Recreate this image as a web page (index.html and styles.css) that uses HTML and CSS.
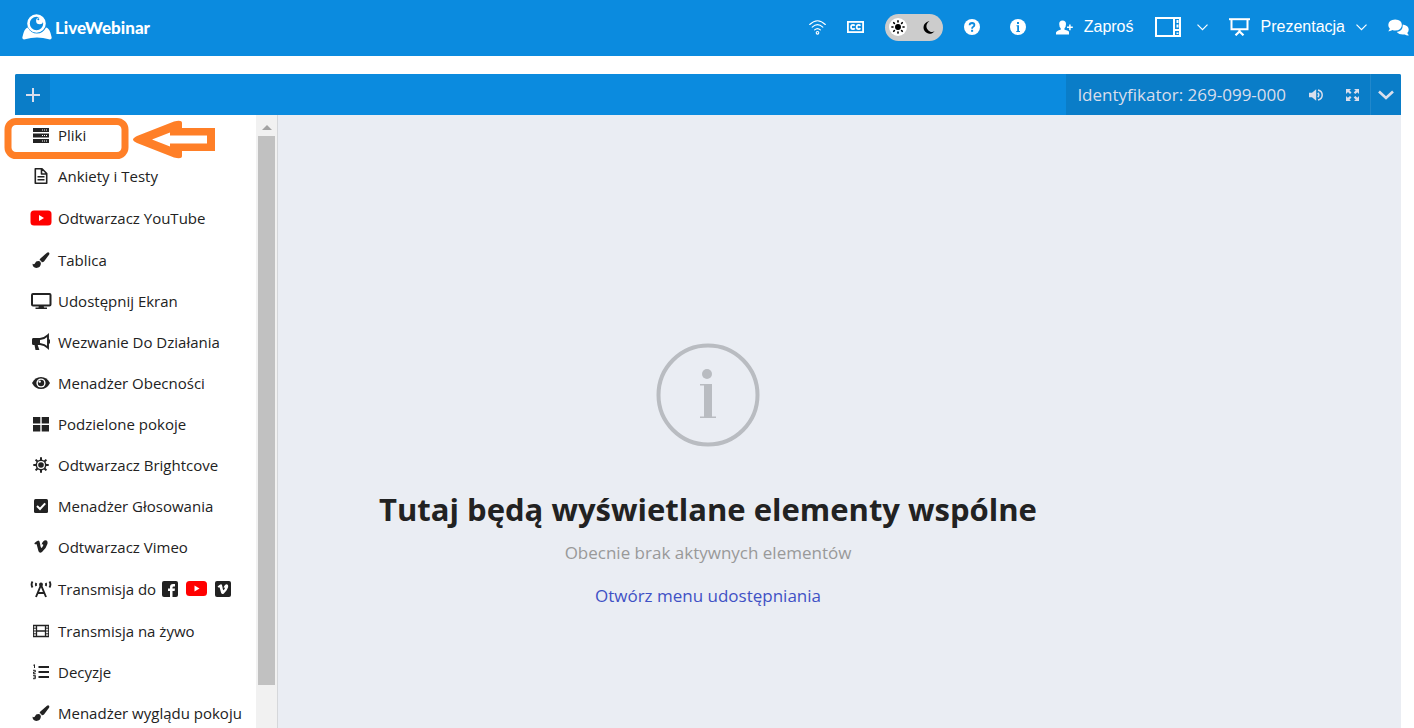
FILE: index.html
```html
<!DOCTYPE html>
<html lang="pl">
<head>
  <meta charset="UTF-8">
  <meta name="viewport" content="width=device-width, initial-scale=1.0">
  <title>LiveWebinar</title>
  <link rel="stylesheet" href="styles.css">
</head>
<body>
<header class="header">
  <a class="logo" href="#">
    <svg width="30" height="26" viewBox="0 0 30 26">
      <path d="M6 13.500 Q3 14 1.500 19 L0.300 23.500 Q0.300 25.800 3 25.300 Q15 21.500 27 25.300 Q29.700 25.800 29.700 23.500 L28.500 19 Q27 14 24 13.500 Q21 19.500 15 19.500 Q9 19.500 6 13.500Z" fill="#fff"/>
      <circle cx="14.500" cy="9.500" r="9.500" fill="#0b8bdf"/>
      <circle cx="14.500" cy="9.500" r="8" fill="none" stroke="#fff" stroke-width="2.600"/>
      <circle cx="17.600" cy="6.800" r="3.500" fill="#fff"/>
      <circle cx="16.300" cy="5.300" r="1" fill="#0b8bdf"/>
    </svg>
    <span>LiveWebinar</span>
  </a>
  <nav class="tools">
    <button class="tool" aria-label="Sieć">
      <svg width="17" height="15" viewBox="0 0 17 15" fill="none" stroke="#fff" stroke-width="1.100" stroke-linecap="round">
        <path d="M0.700 4.500 Q8.500 -3 16.300 4.500M3.200 7.200 Q8.500 2.200 13.800 7.200M5.600 9.900 Q8.500 7.200 11.400 9.900"/>
        <circle cx="8.500" cy="12.800" r="1.300"/>
      </svg>
    </button>
    <button class="tool" aria-label="Napisy">
      <svg width="17" height="12" viewBox="0 0 17 12" fill="none" stroke="#fff">
        <rect x="0.900" y="0.900" width="15.200" height="10.200" stroke-width="1.800"/>
        <path d="M7.700 4.700 Q7.200 3.900 6 3.900 Q4 3.900 4 6 Q4 8.100 6 8.100 Q7.200 8.100 7.700 7.300M13.400 4.700 Q12.900 3.900 11.700 3.900 Q9.700 3.900 9.700 6 Q9.700 8.100 11.700 8.100 Q12.900 8.100 13.400 7.300" stroke-width="1.700"/>
      </svg>
    </button>
    <label class="theme" aria-label="Motyw">
      <input type="checkbox">
      <span class="knob">
        <svg width="14" height="14" viewBox="0 0 14 14" stroke="#000" stroke-width="1.600" stroke-linecap="round">
          <circle cx="7" cy="7" r="2.200"/>
          <path d="M7 0.900V2M7 12V13.100M0.900 7H2M12 7H13.100M2.700 2.700L3.400 3.400M10.600 10.600L11.300 11.300M2.700 11.300L3.400 10.600M10.600 3.400L11.300 2.700"/>
        </svg>
      </span>
      <svg width="12" height="13" viewBox="0 0 12 13"><path d="M6.500 0.300 A6.200 6.200 0 1 0 11.600 10.300 A5.600 5.600 0 0 1 6.500 0.300Z"/></svg>
    </label>
    <button class="tool" aria-label="Pomoc">
      <svg width="16" height="16" viewBox="0 0 16 16">
        <circle cx="8" cy="8" r="8" fill="#fff"/>
        <path d="M5.600 6.200 Q5.700 4 8.100 4 Q10.400 4.100 10.400 6 Q10.400 7.100 9.200 7.800 Q8.100 8.400 8.100 9.700" fill="none" stroke="#0b8bdf" stroke-width="1.800"/>
        <rect x="7.100" y="10.800" width="2" height="2" fill="#0b8bdf"/>
      </svg>
    </button>
    <button class="tool info-tool" aria-label="Informacje">
      <svg width="16" height="16" viewBox="0 0 16 16">
        <circle cx="8" cy="8" r="8" fill="#fff"/>
        <path d="M7 3H9V5H7ZM6.500 6.300H9V12H10V13H6.300V12H7.200V7.300H6.500Z" fill="#0b8bdf"/>
      </svg>
    </button>
    <button class="tool" aria-label="Zaproś">
      <svg width="17" height="15" viewBox="0 0 17 15" fill="#fff">
        <path d="M6.500 0.500 Q10 0.500 10 4 Q10 7 8.500 8.300 V9.800 Q12.800 10.800 13 12 V14.500 H0 V12.500 Q0.500 10.800 4.700 9.800 V8.300 Q3.200 7 3.200 4 Q3.200 0.500 6.500 0.500Z"/>
        <path d="M11 7.300H16.800M13.900 4.400V10.200" stroke="#fff" stroke-width="1.500"/>
      </svg>
      <span>Zaproś</span>
    </button>
    <button class="tool layout-tool" aria-label="Układ">
      <svg width="26" height="20" viewBox="0 0 26 20" fill="none" stroke="#fff">
        <rect x="1" y="1" width="24" height="18" stroke-width="2"/>
        <path d="M19 1V19" stroke-width="2"/>
        <path d="M22.500 3V6M22.500 7.500V10.500M22.500 15.500V17" stroke-width="2"/>
        <path d="M19 13H25" stroke-width="2"/>
      </svg>
      <svg class="chevron" width="11" height="7" viewBox="0 0 11 7"><path d="M0.500 0.700L5.500 5.700L10.500 0.700" fill="none" stroke="#fff" stroke-width="1.200"/></svg>
    </button>
    <button class="tool">
      <svg width="21" height="18" viewBox="0 0 21 18" fill="none" stroke="#fff">
        <path d="M0 1.200H21" stroke-width="2"/>
        <path d="M2.500 1V11.300H18.500V1" stroke-width="2"/>
        <path d="M10.500 11V14M6.500 17.300L10.500 13.500L14.500 17.300" stroke-width="2.200"/>
      </svg>
      <span>Prezentacja</span>
      <svg class="chevron" width="11" height="7" viewBox="0 0 11 7"><path d="M0.500 0.700L5.500 5.700L10.500 0.700" fill="none" stroke="#fff" stroke-width="1.200"/></svg>
    </button>
    <button class="tool" aria-label="Czat">
      <svg width="21" height="17" viewBox="0 0 21 17" fill="#fff">
        <path d="M14.800 5.400 Q20.700 6.200 20.700 10.600 Q20.700 12.700 19.300 14 Q19.800 15.500 21 16.300 Q18.700 16.700 16.800 15.400 Q11.500 16.300 8.700 13 Q14.800 12.300 14.800 5.400Z"/>
        <path d="M7.200 0.500 Q13.900 0.700 13.900 6 Q13.700 11.400 7.200 11.600 Q5.800 11.600 4.500 11.100 Q2.600 12.500 0.200 12.200 Q1.500 11 1.800 9.500 Q0.300 8.100 0.300 6 Q0.400 0.800 7.200 0.500Z"/>
      </svg>
    </button>
  </nav>
</header>

<main class="panel">
  <div class="bar">
    <button class="add" aria-label="Dodaj">
      <svg width="14" height="14" viewBox="0 0 14 14"><path d="M7 0V14M0 7H14" stroke="#d9deec" stroke-width="2"/></svg>
    </button>
    <div class="room">
      <span>Identyfikator: 269-099-000</span>
      <button aria-label="Dźwięk">
        <svg width="14" height="12" viewBox="0 0 14 12" fill="#d9deec">
          <path d="M0 3.700H3L7.200 0.300V11.700L3 8.300H0Z"/>
          <path d="M8.800 3.800Q10.800 6 8.800 8.200M9 0.900Q13.200 2 13.200 6Q13.200 10 9 11.100" fill="none" stroke="#d9deec" stroke-width="1.500"/>
        </svg>
      </button>
      <button aria-label="Pełny ekran">
        <svg width="13" height="12" viewBox="0 0 13 12" fill="#d9deec">
          <path d="M0 0H5L3.500 1.500L5.500 3.500L4 5L2 3L0.500 4.500L0 5ZM13 0V5L11.300 3.200L9.300 5L7.700 3.500L9.700 1.600L8 0ZM0 12V7L1.800 8.700L4 7L5.500 8.500L3.500 10.400L5 12ZM13 12H8L9.700 10.400L7.700 8.500L9.300 7L11.300 8.700L13 7Z"/>
        </svg>
      </button>
    </div>
    <button class="more" aria-label="Więcej">
      <svg width="16" height="10" viewBox="0 0 16 10"><path d="M1 1.500L8 8L15 1.500" fill="none" stroke="#d9deec" stroke-width="2.600"/></svg>
    </button>
  </div>

  <section class="stage">
    <svg class="info" width="104" height="104" viewBox="0 0 104 104" fill="#b9bcc1">
      <circle cx="52" cy="52" r="49.500" fill="none" stroke="#b9bcc1" stroke-width="4"/>
      <circle cx="51" cy="31" r="5"/>
      <path d="M44 41H56V73.500H60V75H44V73.500H48V42.500H44Z"/>
    </svg>
    <h1>Tutaj będą wyświetlane elementy wspólne</h1>
    <p>Obecnie brak aktywnych elementów</p>
    <a href="#">Otwórz menu udostępniania</a>
  </section>

  <aside class="menu">
    <ul>
      <li><button>
        <svg width="22" height="18" viewBox="0 0 22 18"><path d="M3 2H19V6H3ZM3 7.500H19V11.500H3ZM3 13H19V17H3Z"/><path d="M12 4H17.500M12 9.500H17.500M12 15H17.500" stroke="#fff" stroke-width="1" stroke-dasharray="1 1"/></svg>
        Pliki
      </button></li>
      <li><button>
        <svg width="22" height="18" viewBox="0 0 22 18" fill="none" stroke="#222" stroke-width="1.600"><path d="M5.300 1.800H12L16.700 6.500V16.200H5.300ZM11.500 2V7H16.500" stroke-linejoin="round"/><path d="M7.500 9.700H14.500M7.500 12.700H14.500" stroke-width="1.400"/></svg>
        Ankiety i Testy
      </button></li>
      <li class="tall"><button>
        <svg width="22" height="18" viewBox="0 0 22 18"><rect x="0.500" y="1.500" width="21" height="15" rx="3.500" fill="#f00"/><path d="M9 6L14 9L9 12Z" fill="#fff"/></svg>
        Odtwarzacz YouTube
      </button></li>
      <li><button>
        <svg width="22" height="18" viewBox="0 0 22 18"><path d="M18.200 1.200Q19.900 1.600 19.200 3.500L14 10.500Q13 11.500 11.700 11.300Q11.300 9.400 9.700 9.200Q9.500 8.200 10.400 7.400L17 1.700Q17.500 1.200 18.200 1.200ZM8.400 10.100Q10.700 10.200 10.900 12.300Q10.800 16.900 6.300 16.900Q2.600 16.900 2.500 12.800Q4.300 14 5 12.300Q5.800 10 8.400 10.100Z"/></svg>
        Tablica
      </button></li>
      <li><button>
        <svg width="22" height="18" viewBox="0 0 22 18"><rect x="2" y="2" width="18.500" height="11.500" rx="1" fill="none" stroke="#222" stroke-width="2"/><path d="M9 13H13.500L14 15.500H17V17H5.500V15.500H8.500Z"/></svg>
        Udostępnij Ekran
      </button></li>
      <li><button>
        <svg width="22" height="18" viewBox="0 0 22 18"><path d="M3 5H10V12H7.700L9.400 17H5.500L4.500 12H3Q2 11.800 2 10.500V6.500Q2.100 5.100 3 5Z"/><path d="M10 6Q14.500 5.500 18 2.200V14.800Q14.500 11.500 10 11" fill="none" stroke="#222" stroke-width="1.900"/><rect x="18" y="6.500" width="2" height="4"/></svg>
        Wezwanie Do Działania
      </button></li>
      <li><button>
        <svg width="22" height="18" viewBox="0 0 22 18"><path d="M2 9Q5 3 11 3Q17 3 20 9Q17 15 11 15Q5 15 2 9Z"/><circle cx="11" cy="9" r="4.600" fill="#fff"/><circle cx="11" cy="9" r="3.200"/><circle cx="9.700" cy="7.600" r="1.200" fill="#fff"/></svg>
        Menadżer Obecności
      </button></li>
      <li><button>
        <svg width="22" height="18" viewBox="0 0 22 18"><path d="M3 2H10.300V8.500H3ZM11.700 2H19V8.500H11.700ZM3 10H10.300V16.500H3ZM11.700 10H19V16.500H11.700Z"/></svg>
        Podzielone pokoje
      </button></li>
      <li><button>
        <svg width="22" height="18" viewBox="0 0 22 18"><circle cx="11" cy="9" r="4.700" fill="none" stroke="#222" stroke-width="1.500"/><circle cx="11" cy="9" r="2.800"/><path d="M11 1.300V4M11 14V16.700M3.300 9H6M16 9H18.700M5.600 3.600L7.500 5.500M14.500 12.500L16.400 14.400M5.600 14.400L7.500 12.500M14.500 5.500L16.400 3.600" stroke="#222" stroke-width="2"/></svg>
        Odtwarzacz Brightcove
      </button></li>
      <li><button>
        <svg width="22" height="18" viewBox="0 0 22 18"><rect x="4" y="2" width="14" height="14" rx="1.500"/><path d="M7 9L10 12L15.200 6.300" fill="none" stroke="#fff" stroke-width="2"/></svg>
        Menadżer Głosowania
      </button></li>
      <li><button>
        <svg width="22" height="18" viewBox="0 0 22 18"><path d="M4.300 5.300Q6.500 3 8.300 2.500Q9.700 2.500 10 5.500Q10.600 9.700 11.400 10Q12.200 9.700 13.300 7.200Q13.200 5.800 11.600 6.600Q12.700 2.400 15.600 2.300Q18 2.600 17.500 5.700Q16.400 10.100 12 14Q9.600 15.700 8.500 13.300L6.700 6.600Q6.300 5.600 5.100 6.400Z"/></svg>
        Odtwarzacz Vimeo
      </button></li>
      <li class="tall"><button>
        <svg width="22" height="18" viewBox="0 0 22 18" fill="none" stroke="#222" stroke-width="1.900"><path d="M6 17L11 5L16 17M7.800 13H14.200"/><circle cx="11" cy="4.500" r="1"/><path d="M2.500 1.500Q0.700 4.500 2.500 7.500M19.500 1.500Q21.300 4.500 19.500 7.500M6.300 3Q5.500 4.500 6.300 6M15.700 3Q16.500 4.500 15.700 6"/></svg>
        Transmisja do
        <span class="targets">
          <svg width="16" height="16" viewBox="0 0 16 16"><rect width="16" height="16" rx="2"/><path d="M8 16V10H6V7.500H8V6Q8 3 11 3H13V5.400H11.700Q10.500 5.400 10.500 6.500V7.500H13L12.600 10H10.500V16Z" fill="#fff"/></svg>
          <svg width="21" height="15" viewBox="0 0 21 15"><rect width="21" height="15" rx="3.500" fill="#f00"/><path d="M8.500 4.500L13.500 7.500L8.500 10.500Z" fill="#fff"/></svg>
          <svg width="16" height="16" viewBox="0 0 16 16"><rect width="16" height="16" rx="2"/><path d="M2.600 5.600Q4.500 3.500 6 3.300Q7.100 3.300 7.400 5.700Q7.800 8.900 8.400 9.300Q9 9 9.900 7.200Q9.800 6.200 8.600 6.700Q9.500 3.400 11.700 3.300Q13.600 3.500 13.200 6Q12.400 9.400 8.900 12.400Q7 13.700 6.100 11.700L4.700 6.700Q4.300 5.900 3.300 6.500Z" fill="#fff"/></svg>
        </span>
      </button></li>
      <li><button>
        <svg width="22" height="18" viewBox="0 0 22 18" fill="none" stroke="#222" stroke-width="1.300"><path d="M3 3.500H19M3 14.500H19M6.500 3V15M15.500 3V15M6.500 9H15.500"/><path d="M3.600 3V15M18.400 3V15M3 6.200H6.500M3 9H6.500M3 11.800H6.500M15.500 6.200H19M15.500 9H19M15.500 11.800H19" stroke-width="1"/></svg>
        Transmisja na żywo
      </button></li>
      <li><button>
        <svg width="22" height="18" viewBox="0 0 22 18" fill="none" stroke="#222"><path d="M8.500 4H19M8.500 9H19M8.500 14H19" stroke-width="2"/><path d="M3.300 2.300L4.500 1.700V5M3 7.300H5.300V9H3.500V10.700H5.700M3 12.300H5.300V15.700H3M3.500 14H5.300" stroke-width="1"/></svg>
        Decyzje
      </button></li>
      <li><button>
        <svg width="22" height="18" viewBox="0 0 22 18"><path d="M18.200 1.200Q19.900 1.600 19.200 3.500L14 10.500Q13 11.500 11.700 11.300Q11.300 9.400 9.700 9.200Q9.500 8.200 10.400 7.400L17 1.700Q17.500 1.200 18.200 1.200ZM8.400 10.100Q10.700 10.200 10.900 12.300Q10.800 16.900 6.300 16.900Q2.600 16.900 2.500 12.800Q4.300 14 5 12.300Q5.800 10 8.400 10.100Z"/></svg>
        Menadżer wyglądu pokoju
      </button></li>
    </ul>
    <div class="scroll">
      <svg width="10" height="5" viewBox="0 0 10 5"><path d="M0 5L5 0L10 5Z" fill="#a3a3a3"/></svg>
      <div class="thumb"></div>
    </div>
    <!-- marker over the first menu item -->
    <svg class="marker" width="212" height="42" viewBox="0 0 212 42" fill="none">
      <rect x="4" y="3.500" width="117" height="34" rx="8" stroke="#ff7f27" stroke-width="7"/>
      <path fill="#ff7f27" fill-rule="evenodd" d="M129 21.500Q129 20 133 18L170 3.500Q178 1.500 178 5V10H211V33H178V38Q178 41.500 170 39.500L133 25Q129 23 129 21.500ZM148 21.500L166 28.500V25.500H203V17.500H166V14.500Z"/>
    </svg>
  </aside>
</main>
</body>
</html>
```
FILE: styles.css
```css
* {
  box-sizing: border-box;
}
body {
  margin: 0;
  height: 100vh;
  display: flex;
  flex-direction: column;
  overflow: hidden;
  background: #fff;
  color: #222;
  font-family: "Open Sans", "Noto Sans", sans-serif;
}
button {
  padding: 0;
  border: 0;
  background: none;
  font: inherit;
  color: inherit;
  cursor: pointer;
}
svg {
  display: block;
  flex: none;
}
.header {
  display: flex;
  align-items: center;
  justify-content: space-between;
  height: 56px;
  flex: none;
  padding: 0 5px 2px 22px;
  background: #0b8bdf;
  color: #fff;
}
.logo {
  display: flex;
  align-items: center;
  gap: 3px;
  color: #fff;
  font: 900 17px Lato, sans-serif;
  text-decoration: none;
}
.tools {
  display: flex;
  align-items: center;
  gap: 21px;
  font: 16px "Liberation Sans", Arial, sans-serif;
}
.tool {
  display: flex;
  align-items: center;
  gap: 11px;
}
.info-tool {
  margin: 0 9px;
}
.layout-tool {
  gap: 16px;
}
.theme {
  display: flex;
  align-items: center;
  justify-content: space-between;
  width: 58px;
  height: 27px;
  padding: 0 8px 0 4px;
  border-radius: 14px;
  background: #ccc;
}
.theme input {
  position: absolute;
  opacity: 0;
}
.knob {
  display: flex;
  align-items: center;
  justify-content: center;
  width: 18px;
  height: 18px;
  border-radius: 50%;
  background: #fff;
}
.panel {
  position: relative;
  display: flex;
  flex-direction: column;
  flex: 1;
  min-height: 0;
  margin: 18px 13px 0 15px;
}
.bar {
  display: flex;
  height: 41px;
  flex: none;
  border-radius: 2px 2px 0 0;
  overflow: hidden;
  background: #0b8bdf;
  color: #d9deec;
}
.add, .room, .more {
  display: flex;
  align-items: center;
  justify-content: center;
  background: #0a7dc8;
}
.add {
  width: 35px;
}
.room {
  gap: 23px;
  margin-left: auto;
  padding: 0 11px;
  font-size: 17px;
}
.more {
  width: 31px;
  border-left: 1px solid #2188cc;
}
.stage {
  display: flex;
  flex-direction: column;
  align-items: center;
  flex: 1;
  padding-top: 228px;
  background: #eaedf3;
  font-size: 17px;
  line-height: 24px;
}
.stage h1 {
  margin: 39px 0 9px;
  font-size: 31px;
  line-height: 46px;
}
.stage p {
  margin: 0 0 19px;
  color: #999;
}
.stage a {
  color: #3f51c5;
  text-decoration: none;
}
.menu {
  position: absolute;
  top: 41px;
  left: 0;
  bottom: 0;
  display: flex;
  width: 263px;
  border-right: 1px solid #d5d7da;
  background: #fff;
}
.menu ul {
  flex: 1;
  margin: 0;
  padding: 0;
  list-style: none;
  overflow: hidden;
}
.menu li {
  height: 41px;
}
.menu .tall {
  height: 43px;
}
.menu li button {
  display: flex;
  align-items: center;
  gap: 6px;
  width: 100%;
  height: 100%;
  padding: 0 0 2px 15px;
  font-size: 15px;
  white-space: nowrap;
}
.menu svg {
  fill: #222;
}
.menu svg[fill="none"] {
  fill: none;
}
.targets {
  display: flex;
  align-items: center;
  gap: 8px;
}
.scroll {
  display: flex;
  flex-direction: column;
  align-items: center;
  gap: 6px;
  width: 21px;
  padding-top: 10px;
  background: #f1f1f1;
}
.thumb {
  width: 17px;
  height: 91%;
  background: #c1c1c1;
}
.menu .marker {
  position: absolute;
  top: 3px;
  left: -11px;
}
```
